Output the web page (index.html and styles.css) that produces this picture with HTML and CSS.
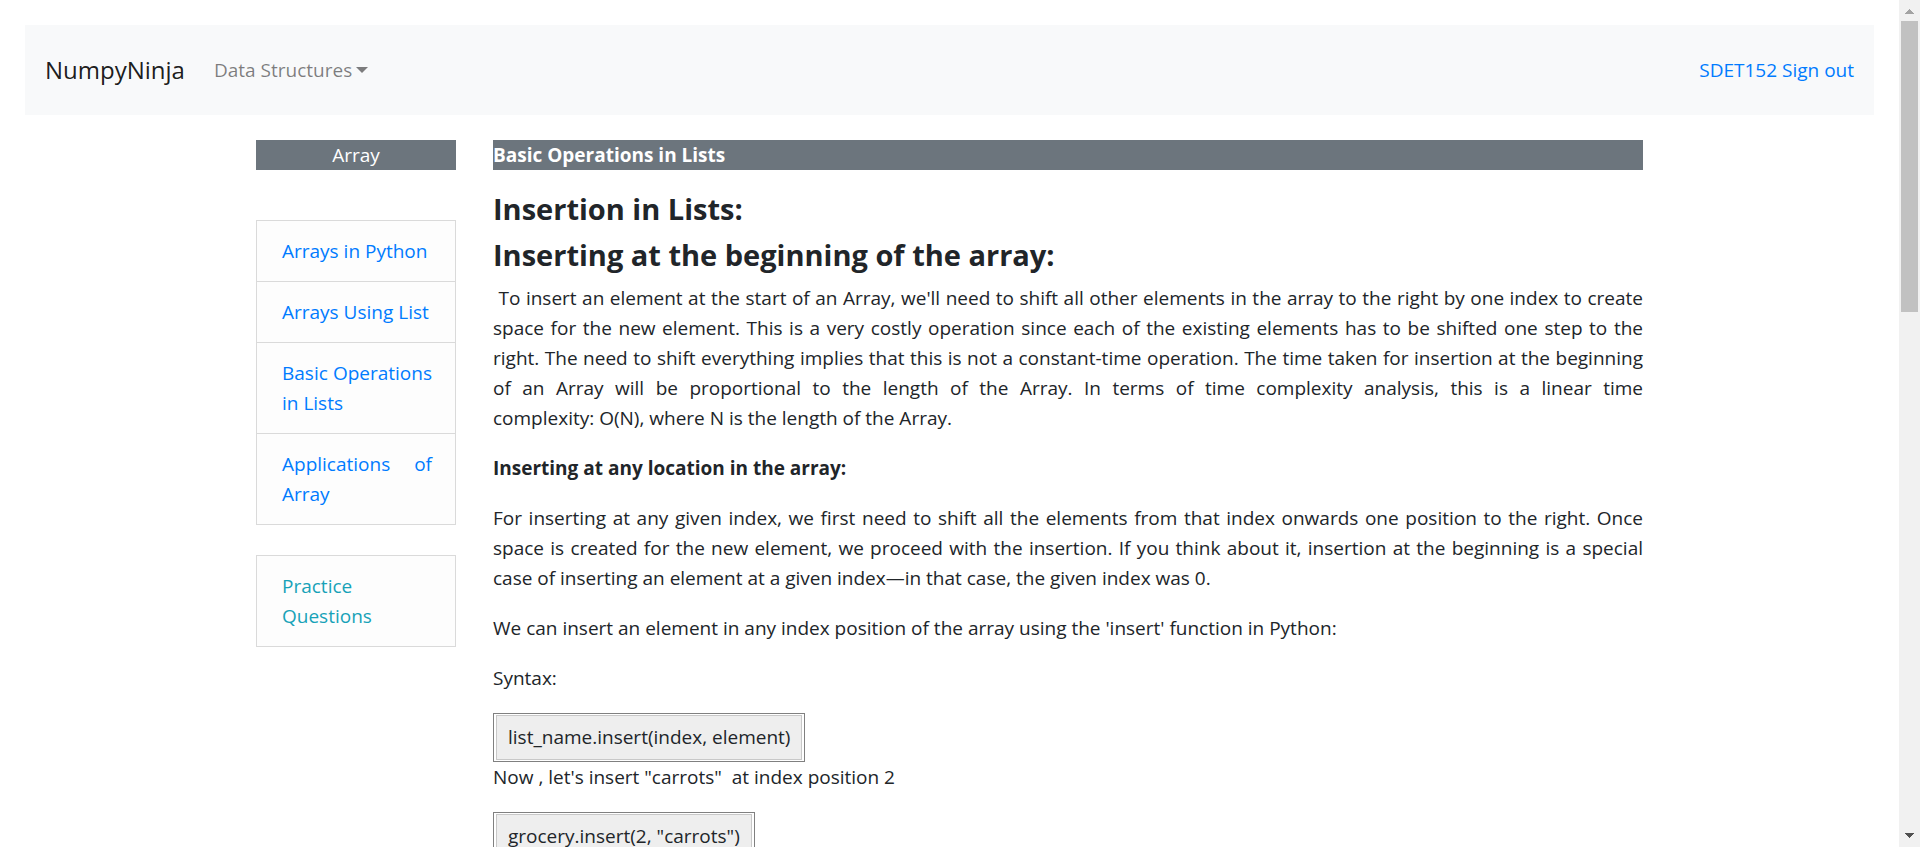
FILE: index.html
```html
<!DOCTYPE html>
<html lang="en">
<head>
<meta charset="utf-8">
<title>NumpyNinja</title>
<link rel="stylesheet" href="styles.css">
</head>
<body>
<div class="window">
  <div class="page">
    <nav class="navbar">
      <a class="brand" href="#">NumpyNinja</a>
      <button class="dropdown" type="button">Data Structures</button>
      <div class="account"><a href="#">SDET152</a> <a href="#">Sign out</a></div>
    </nav>
    <div class="container">
      <aside class="sidebar">
        <div class="bar bar-center">Array</div>
        <div class="list topics">
          <a href="#">Arrays in Python</a>
          <a href="#">Arrays Using List</a>
          <a href="#">Basic Operations in Lists</a>
          <a href="#">Applications of Array</a>
        </div>
        <div class="list practice">
          <a href="#">Practice Questions</a>
        </div>
      </aside>
      <main class="content">
        <div class="bar"><strong>Basic Operations in Lists</strong></div>
        <h4>Insertion in Lists:</h4>
        <h4>Inserting at the beginning of the array:</h4>
        <p>&nbsp;To insert an element at the start of an Array, we'll need to shift all other elements in the array to the right by one index to create space for the new element. This is a very costly operation since each of the existing elements has to be shifted one step to the right. The need to shift everything implies that this is not a constant-time operation. The time taken for insertion at the beginning of an Array will be proportional to the length of the Array. In terms of time complexity analysis, this is a linear time complexity:&nbsp;O(N), where N is the length of the Array.</p>
        <p><strong>Inserting at any location in the array:</strong></p>
        <p>For inserting at any given index, we first need to shift all the elements from that index onwards one position to the right. Once space is created for the new element, we proceed with the insertion. If you think about it, insertion at the beginning is a special case of inserting an element at a given index—in that case, the given index was 0.</p>
        <p>We can insert an element in any index position of the array using the 'insert' function in Python:</p>
        <p>Syntax:</p>
        <div class="code"><div class="code-inner">list_name.insert(index, element)</div></div>
        <p>Now , let's insert "carrots"&nbsp; at index position 2</p>
        <div class="code"><div class="code-inner">grocery.insert(2, "carrots")</div></div>
      </main>
    </div>
  </div>
  <div class="scrollbar" aria-hidden="true">
    <svg class="arrow" viewBox="0 0 21 21"><path d="M6 14v-1h1v-1h1v-1h1v-1h1v-1h1v1h1v1h1v1h1v1h1v1z" fill="#a3a3a3"/></svg>
    <div class="track"><div class="thumb"></div></div>
    <svg class="arrow" viewBox="0 0 21 21"><path d="M6 7v1h1v1h1v1h1v1h1v1h1v-1h1v-1h1v-1h1v-1h1v-1z" fill="#505050"/></svg>
  </div>
</div>
</body>
</html>
```
FILE: styles.css
```css
* { box-sizing: border-box; }
body {
  margin: 0;
  background: #fff;
  color: #212529;
  font: 400 19px/30px "Open Sans", "Noto Sans", sans-serif;
}
a { color: #007bff; text-decoration: none; }
.window {
  display: grid;
  grid-template-columns: minmax(0, 1fr) 21px;
  height: 100vh;
}
.page { overflow: hidden; }
.navbar {
  display: flex;
  align-items: center;
  margin: 25px;
  padding: 24px 20px;
  min-height: 90px;
  background: #f8f9fa;
}
.brand {
  margin-right: 29px;
  color: rgba(0, 0, 0, .9);
  font-size: 24px;
}
.dropdown {
  display: flex;
  align-items: center;
  gap: 4px;
  padding: 0;
  border: 0;
  background: none;
  color: rgba(0, 0, 0, .5);
  font: inherit;
}
.dropdown::after {
  content: "";
  border-top: 6px solid;
  border-right: 6px solid transparent;
  border-left: 6px solid transparent;
}
.account { margin-left: auto; }
.container {
  display: grid;
  grid-template-columns: 200px minmax(0, 1fr);
  column-gap: 37px;
  max-width: 1387px;
  margin: 0 auto;
}
.bar { background: #6c757d; color: #fff; }
.bar-center { text-align: center; }
.list { border: 1px solid #dadada; background: #fdfdfd; text-align: justify; }
.list a { display: block; padding: 15px 23px 15px 25px; }
.list a + a { border-top: 1px solid #dadada; }
.topics { margin-top: 50px; }
.practice { margin-top: 30px; }
.practice a { color: #17a2b8; }
.content { text-align: justify; }
.content .bar { margin-bottom: 21px; }
h4 { margin: 0 0 10px; font-size: 29px; line-height: 36px; font-weight: 700; }
p { margin: 0 0 20px; }
strong { font-weight: 700; }
.code {
  width: fit-content;
  padding: 1px 2px;
  border: 1px solid #808080;
}
.code-inner { padding: 6px 11px 7px; border: 1px solid #c8c8c8; background: #eee; }
.scrollbar { display: flex; flex-direction: column; background: #f1f1f1; }
.arrow { display: block; width: 21px; height: 21px; }
.track { flex: 1; padding: 0 2px; }
.thumb { height: 36.2%; background: #c1c1c1; }
```
